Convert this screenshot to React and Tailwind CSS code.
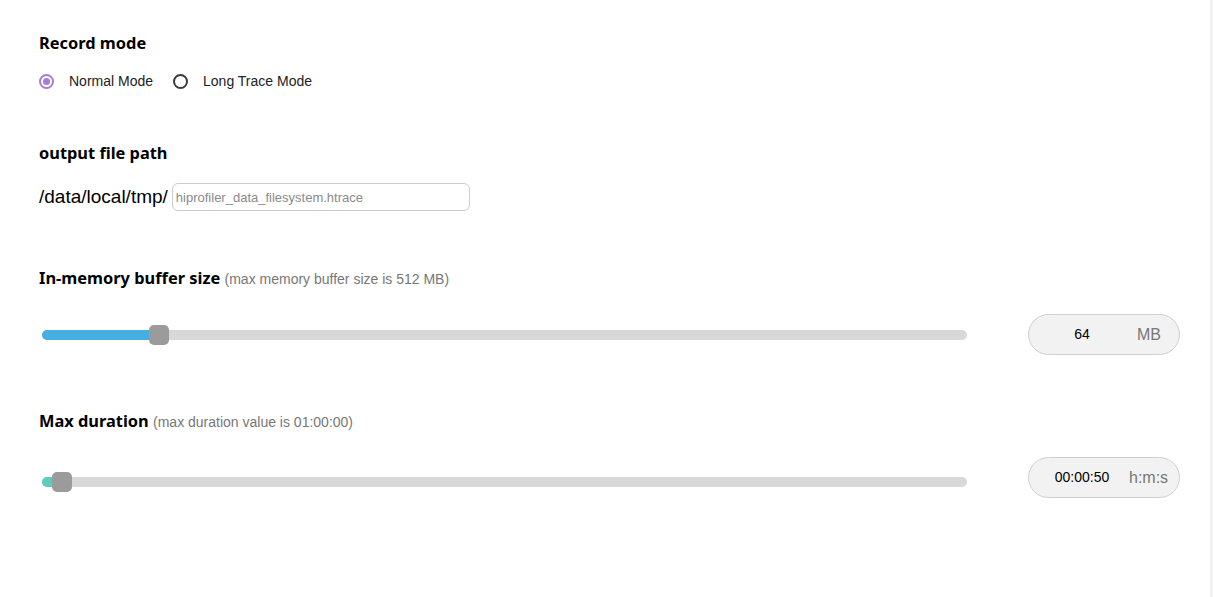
import React, { useState } from "react";

const heading = "font-['Noto_Sans',sans-serif] text-[16.4px] font-bold leading-[22px] text-black";
const body = "font-['Liberation_Sans',Arial,sans-serif]";

function Radio({ checked, label, onClick }) {
  return (
    <button type="button" onClick={onClick} className="flex items-center gap-[15px]">
      {checked ? (
        <span className="grid h-[15px] w-[15px] place-items-center rounded-full border-2 border-[#a77bd8]">
          <span className="h-[7px] w-[7px] rounded-full bg-[#a77bd8]" />
        </span>
      ) : (
        <span className="h-[15px] w-[15px] rounded-full border-2 border-[#3a3a3a]" />
      )}
      <span className={`${body} text-[14px] text-[#222]`}>{label}</span>
    </button>
  );
}

function SliderRow({ fill, color, value, unit, trackTop, unitGap }) {
  return (
    <div className="flex items-start">
      <div className="relative ml-[3px] w-[925px]" style={{ marginTop: trackTop }}>
        <div className="h-[10px] w-full rounded-full bg-[#d8d8d8]" />
        <div className={`absolute left-0 top-0 h-[10px] rounded-l-full ${color}`} style={{ width: fill }} />
        <div
          className="absolute top-[-5px] h-[20px] w-[20px] rounded-[5px] bg-[#9b9b9b]"
          style={{ left: fill - 10 }}
        />
      </div>
      <div className="ml-[61px] flex h-[41px] w-[152px] items-center overflow-hidden rounded-full border border-[#cfcfcf] bg-[#f2f2f2]">
        <span className={`${body} w-[106px] shrink-0 text-center text-[14px] text-black`}>{value}</span>
        <span className={`${body} shrink-0 text-[16px] text-[#777]`} style={{ marginLeft: unitGap }}>
          {unit}
        </span>
      </div>
    </div>
  );
}

export default function App() {
  const [mode, setMode] = useState("normal");

  return (
    <div className="h-[597px] w-full border-r-[3px] border-[#f2f2f2] bg-white pl-[39px] pt-[32px]">
      <div className={heading}>Record mode</div>
      <div className="mt-[17px] flex h-[20px] items-center gap-[20px]">
        <Radio checked={mode === "normal"} label="Normal Mode" onClick={() => setMode("normal")} />
        <Radio checked={mode === "long"} label="Long Trace Mode" onClick={() => setMode("long")} />
      </div>

      <div className={`${heading} mt-[51px]`}>output file path</div>
      <div className="mt-[19px] flex h-[28px] items-center gap-[4px]">
        <span className={`${body} text-[19px] text-black`}>/data/local/tmp/</span>
        <input
          className={`${body} h-[28px] w-[298px] rounded-[6px] border border-[#cccccc] px-[3px] text-[13px] outline-none placeholder:text-[#8a8a8a]`}
          placeholder="hiprofiler_data_filesystem.htrace"
        />
      </div>

      <div className={`${heading} mt-[56px]`}>
        In-memory buffer size{" "}
        <span className={`${body} text-[14px] font-normal text-[#777]`}>(max memory buffer size is 512 MB)</span>
      </div>
      <div className="mt-[24px]">
        <SliderRow fill={117} color="bg-[#46aee0]" value="64" unit="MB" trackTop={16} unitGap={2} />
      </div>

      <div className={`${heading} mt-[55px]`}>
        Max duration{" "}
        <span className={`${body} text-[14px] font-normal text-[#777]`}>(max duration value is 01:00:00)</span>
      </div>
      <div className="mt-[24px]">
        <SliderRow fill={20} color="bg-[#5ccdbd]" value="00:00:50" unit="h:m:s" trackTop={20} unitGap={-6} />
      </div>
    </div>
  );
}
